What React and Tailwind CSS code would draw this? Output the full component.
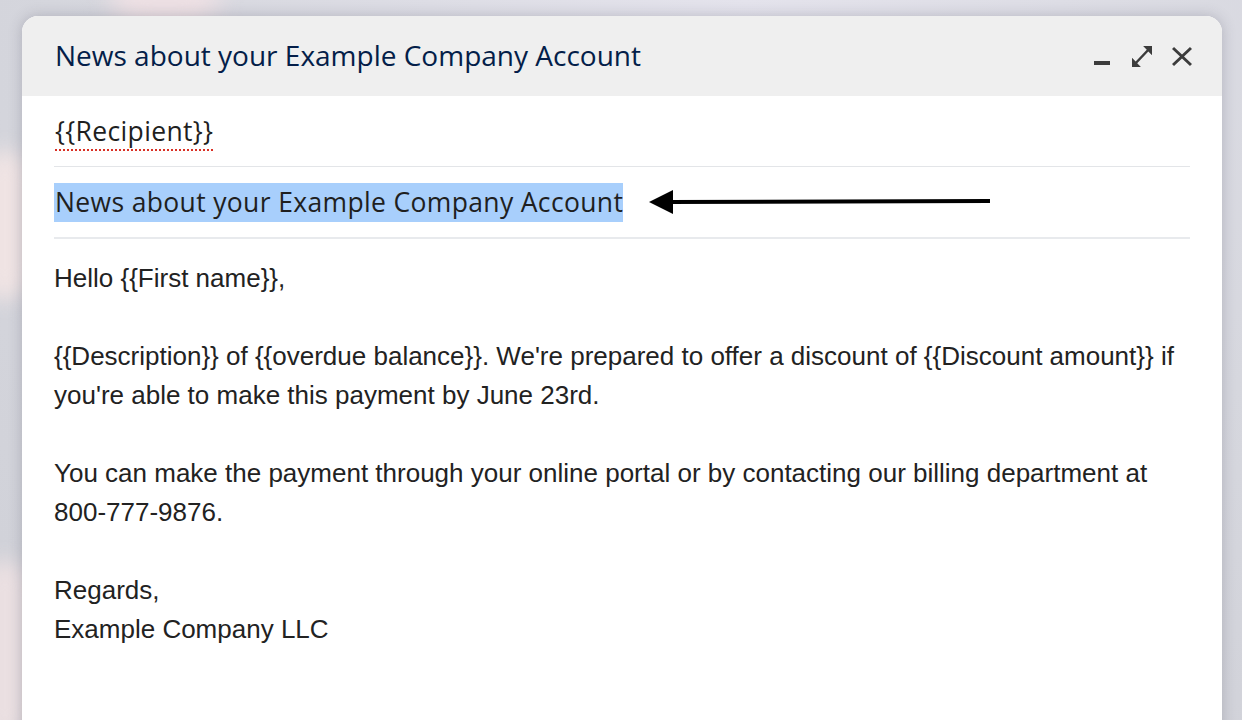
import React from "react";

export default function App() {
  return (
    <div className="relative w-[1242px] h-[720px] overflow-hidden bg-[#d6d7de]">
      <div className="absolute inset-0 bg-[radial-gradient(ellipse_at_60%_0%,#e4e3ec_0%,#d6d7de_60%,#cfd0d7_100%)]" />
      <div className="absolute left-[110px] top-[-40px] w-[110px] h-[70px] rounded-full bg-[#ecdfe3] blur-[12px]" />
      <div className="absolute left-[-20px] top-[150px] w-[50px] h-[150px] rounded-full bg-[#efe3e3] blur-[10px]" />
      <div className="absolute left-[-20px] top-[560px] w-[50px] h-[180px] rounded-full bg-[#eadfe1] blur-[10px]" />

      <div className="relative ml-[22px] mt-[16px] w-[1200px] h-[740px] rounded-t-[16px] bg-white shadow-[0_0_14px_rgba(60,60,80,0.25)] overflow-hidden">
        <div className="flex items-center h-[80px] bg-[#efefef] pl-[33px] pr-[30px]">
          <div className="flex-1 text-[28px] leading-[36px] text-[#041e49] font-[family-name:'Open_Sans',sans-serif] mb-[2px]">
            News about your Example Company Account
          </div>
          <div className="flex items-center text-[#3c3c3c]">
            <div className="w-[16px] h-[4px] bg-[#3c3c3c] mt-[14px]" />
            <svg className="ml-[22px]" width="20" height="21" viewBox="3 3 18 18" preserveAspectRatio="none" fill="currentColor">
              <path d="M21 11V3h-8l3.29 3.29-10 10L3 13v8h8l-3.29-3.29 10-10z" />
            </svg>
            <svg className="ml-[20px]" width="20" height="19" viewBox="5 5 14 14" preserveAspectRatio="none" fill="currentColor">
              <path d="M19 6.41L17.59 5 12 10.59 6.41 5 5 6.41 10.59 12 5 17.59 6.41 19 12 13.41 17.59 19 19 17.59 13.41 12z" />
            </svg>
          </div>
        </div>

        <div className="px-[32px] font-[family-name:'Open_Sans',sans-serif] text-[#1f1f1f]">
          <div className="h-[71px] flex items-center border-b border-[#e3e5e8]">
            <span className="text-[26.5px] tracking-[0.35px] leading-[30px] underline decoration-dotted decoration-[#d93025] decoration-[2px] underline-offset-[8px] pl-[1px]">
              {"{{Recipient}}"}
            </span>
          </div>
          <div className="h-[72px] flex items-center border-b-2 border-[#e8eaed]">
            <span className="bg-[#a8cffc] text-[26.5px] tracking-[0.35px] leading-[39px] pl-[1px] mt-[1px]">
              News about your Example Company Account
            </span>
            <svg className="ml-[26px]" width="342" height="26" viewBox="0 0 342 26">
              <path d="M0 13 L24 1 L24 25 Z" fill="#000" />
              <line x1="20" y1="13" x2="341" y2="12" stroke="#000" strokeWidth="4" />
            </svg>
          </div>

          <div className="pt-[20px] font-[family-name:'Liberation_Sans',Arial,sans-serif] text-[26px] leading-[39px] text-[#222]">
            <p>{"Hello {{First name}},"}</p>
            <p className="mt-[39px]">
              {"{{Description}} of {{overdue balance}}. We're prepared to offer a discount of {{Discount amount}} if"}
              <br />
              {"you're able to make this payment by June 23rd."}
            </p>
            <p className="mt-[39px]">
              You can make the payment through your online portal or by contacting our billing department at
              <br />
              800-777-9876.
            </p>
            <p className="mt-[39px]">
              Regards,
              <br />
              Example Company LLC
            </p>
          </div>
        </div>
      </div>
    </div>
  );
}
